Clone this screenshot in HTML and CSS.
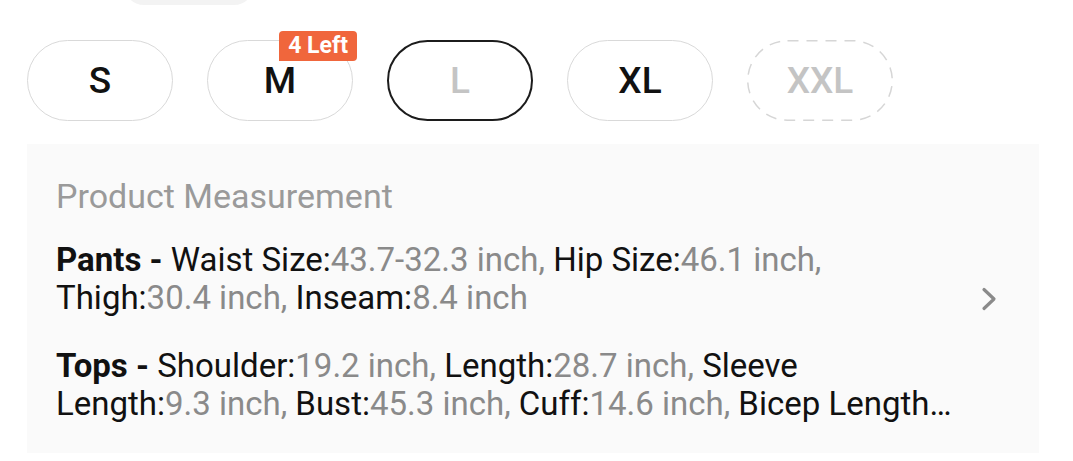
FILE: index.html
```html
<!DOCTYPE html>
<html>
<head>
<meta charset="utf-8">
<link rel="stylesheet" href="styles.css">
</head>
<body>
<div class="page">
  <div class="peek"></div>
  <div class="sizes">
    <div class="pill">S</div>
    <div class="pill has-badge">M<span class="badge">4 Left</span></div>
    <div class="pill selected">L</div>
    <div class="pill">XL</div>
    <div class="pill soldout">XXL<svg class="dash" width="146" height="81" viewBox="0 0 146 81"><rect x="0.75" y="0.75" width="144.5" height="79.5" rx="39.75" ry="39.75" fill="none" stroke="#d6d6d6" stroke-width="1.5" stroke-dasharray="11 8"/></svg></div>
  </div>
  <div class="measure">
    <div class="measure-body">
      <div class="measure-title">Product Measurement</div>
      <p class="row"><b>Pants - </b>Waist Size:<span class="v">43.7-32.3 inch, </span>Hip Size:<span class="v">46.1 inch, </span>Thigh:<span class="v">30.4 inch, </span>Inseam:<span class="v">8.4 inch</span></p>
      <p class="row"><b>Tops - </b>Shoulder:<span class="v">19.2 inch, </span>Length:<span class="v">28.7 inch, </span>Sleeve <span class="kv">Length:<span class="v">9.3 inch, </span></span>Bust:<span class="v">45.3 inch, </span>Cuff:<span class="v">14.6 inch, </span>Bicep Length…</p>
    </div>
    <svg class="chev" width="18" height="26" viewBox="0 0 18 26"><polyline points="4,3.5 14,13 4,22.5" fill="none" stroke="#8a8a8a" stroke-width="3.2" stroke-linecap="round" stroke-linejoin="round"/></svg>
  </div>
</div>
</body>
</html>
```
FILE: styles.css
```css
* { box-sizing: border-box; }
html, body { margin: 0; padding: 0; background: #fff; }
body { font-family: Roboto, "Noto Sans", "Liberation Sans", sans-serif; color: #111; }
.page { width: 1073px; height: 461px; overflow: hidden; }
.peek {
  width: 130px; height: 40px; margin-top: -35px; margin-left: 124px;
  background: #f3f3f3; border-radius: 20px;
}
.sizes {
  display: flex; gap: 34px; padding-left: 27px; margin-top: 35px;
}
.pill {
  position: relative;
  width: 146px; height: 81px;
  border: 1px solid #d9d9d9; border-radius: 41px;
  display: flex; align-items: center; justify-content: center;
  font-size: 37px; font-weight: 500; color: #111;
}
.pill.selected { border: 2.5px solid #1c1c1c; color: #c4c4c4; }
.pill.soldout { border: none; color: #c4c4c4; }
.dash { position: absolute; left: 0; top: 0; }
.badge {
  position: absolute; top: -10px; right: -5px;
  height: 30px; padding: 0 9px;
  background: #f0663c; color: #fff;
  font-size: 23px; font-weight: 700; line-height: 30px;
  border-radius: 4px 4px 4px 0;
}
.measure {
  margin: 23px 34px 0 27px;
  height: 309px;
  background: #fafafa;
  display: flex; align-items: center;
  padding: 0 41px 0 29px;
}
.measure-body { flex: 1; align-self: flex-start; padding-top: 32px; max-width: 902px; }
.measure-title { font-size: 34px; line-height: 40px; color: #9a9a9a; margin-bottom: 25px; }
.row { margin: 0 0 30px; font-size: 33px; line-height: 38px; color: #111; }
.row b { font-weight: 700; }
.kv { white-space: nowrap; }
.v { color: #8a8a8a; }
.chev { margin-left: auto; flex: none; }
```
